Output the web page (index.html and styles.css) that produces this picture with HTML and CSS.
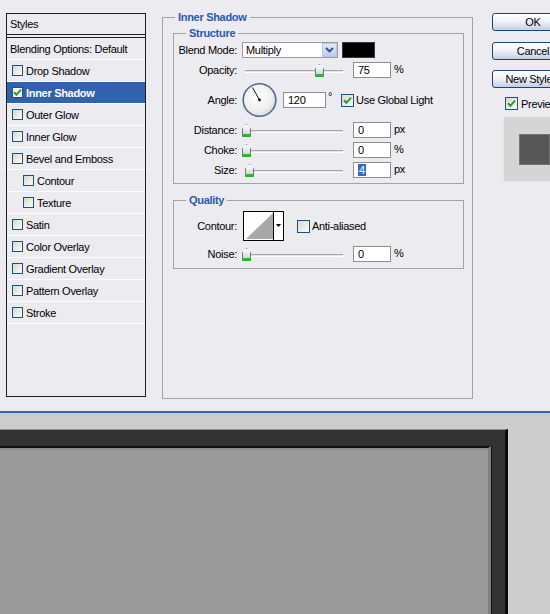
FILE: index.html
```html
<!DOCTYPE html>
<html lang="en">
	<head>
		<meta charset="UTF-8" />
		<meta name="viewport" content="width=device-width, initial-scale=1.0" />
		<title>Layer Style</title>

		<link rel="stylesheet" href="styles.css">
	</head>
	<body>
		<div class="dialog">
			<!-- style list -->
			<ul class="styles">
				<li class="styles_head">Styles</li>
				<li class="styles_blend">Blending Options: Default</li>
				<li><span class="check"></span>Drop Shadow</li>
				<li class="on">
					<span class="check">
						<svg width="9" height="9" viewBox="0 0 9 9"><path d="M1 4.2 L3.4 6.8 L8 1.6" fill="none" stroke="#21a121" stroke-width="2" /></svg>
					</span>Inner Shadow
				</li>
				<li><span class="check"></span>Outer Glow</li>
				<li><span class="check"></span>Inner Glow</li>
				<li><span class="check"></span>Bevel and Emboss</li>
				<li class="sub"><span class="check"></span>Contour</li>
				<li class="sub"><span class="check"></span>Texture</li>
				<li><span class="check"></span>Satin</li>
				<li><span class="check"></span>Color Overlay</li>
				<li><span class="check"></span>Gradient Overlay</li>
				<li><span class="check"></span>Pattern Overlay</li>
				<li><span class="check"></span>Stroke</li>
			</ul>

			<!-- settings -->
			<fieldset class="group main">
				<legend>Inner Shadow</legend>

				<fieldset class="group structure">
					<legend>Structure</legend>

					<div class="row">
						<span class="label">Blend Mode:</span>
						<div class="select">
							<span class="select_text">Multiply</span>
							<span class="select_btn">
								<svg width="9" height="6" viewBox="0 0 9 6"><path d="M1 1 L4.5 4.5 L8 1" fill="none" stroke="#3b4f74" stroke-width="1.8" /></svg>
							</span>
						</div>
						<span class="swatch"></span>
					</div>

					<div class="row">
						<span class="label">Opacity:</span>
						<div class="slider">
							<span class="slider_track"></span>
							<span class="thumb" style="left: 73px"></span>
						</div>
						<span class="field">75</span>
						<span class="unit">%</span>
					</div>

					<div class="row row_angle">
						<span class="label">Angle:</span>
						<svg class="dial" width="35" height="36" viewBox="0 0 35 36">
							<defs>
								<radialGradient id="dialFill" cx="0.45" cy="0.4" r="0.6">
									<stop offset="0" stop-color="#ffffff" />
									<stop offset="0.7" stop-color="#f0f0ee" />
									<stop offset="1" stop-color="#d6d9e2" />
								</radialGradient>
							</defs>
							<circle cx="17.5" cy="18" r="16.3" fill="url(#dialFill)" stroke="#56698e" stroke-width="1.6" />
							<line x1="17.5" y1="18" x2="10.5" y2="5.5" stroke="#111" stroke-width="1" />
							<circle cx="17.5" cy="18" r="1.4" fill="#111" />
						</svg>
						<span class="field field_angle">120</span>
						<span class="degree">°</span>
						<span class="check check_main">
							<svg width="9" height="9" viewBox="0 0 9 9"><path d="M1 4.2 L3.4 6.8 L8 1.6" fill="none" stroke="#21a121" stroke-width="2" /></svg>
						</span>
						<span class="check_text">Use Global Light</span>
					</div>

					<div class="row">
						<span class="label">Distance:</span>
						<div class="slider">
							<span class="slider_track"></span>
							<span class="thumb" style="left: 0px"></span>
						</div>
						<span class="field">0</span>
						<span class="unit">px</span>
					</div>

					<div class="row">
						<span class="label">Choke:</span>
						<div class="slider">
							<span class="slider_track"></span>
							<span class="thumb" style="left: 0px"></span>
						</div>
						<span class="field">0</span>
						<span class="unit">%</span>
					</div>

					<div class="row">
						<span class="label">Size:</span>
						<div class="slider">
							<span class="slider_track"></span>
							<span class="thumb" style="left: 3px"></span>
						</div>
						<span class="field"><span class="selected">4</span></span>
						<span class="unit">px</span>
					</div>
				</fieldset>

				<fieldset class="group quality">
					<legend>Quality</legend>

					<div class="row row_contour">
						<span class="label">Contour:</span>
						<svg class="contour" width="41" height="30" viewBox="0 0 41 30">
							<rect x="0.5" y="0.5" width="40" height="29" fill="#fff" stroke="#000" />
							<polygon points="3,28 30,2 30,28" fill="#a8a8a8" />
							<line x1="30.5" y1="1" x2="30.5" y2="29" stroke="#000" />
							<polygon points="33,13 38,13 35.5,16" fill="#000" />
						</svg>
						<span class="check check_main check_aa"></span>
						<span class="check_text">Anti-aliased</span>
					</div>

					<div class="row row_noise">
						<span class="label">Noise:</span>
						<div class="slider">
							<span class="slider_track"></span>
							<span class="thumb" style="left: 0px"></span>
						</div>
						<span class="field">0</span>
						<span class="unit">%</span>
					</div>
				</fieldset>
			</fieldset>

			<!-- buttons -->
			<div class="side">
				<div class="btn">OK</div>
				<div class="btn btn_cancel">Cancel</div>
				<div class="btn btn_new">New Style...</div>
				<div class="preview_check">
					<span class="check check_main">
						<svg width="9" height="9" viewBox="0 0 9 9"><path d="M1 4.2 L3.4 6.8 L8 1.6" fill="none" stroke="#21a121" stroke-width="2" /></svg>
					</span>
					<span class="check_text">Preview</span>
				</div>
				<div class="preview_box">
					<div class="preview_square"></div>
				</div>
			</div>
		</div>

		<!-- document canvas -->
		<div class="canvas">
			<div class="frame">
				<div class="canvas_inner"></div>
			</div>
		</div>
	</body>
</html>
```

FILE: styles.css
```css
* {
	padding: 0;
	margin: 0;
	box-sizing: border-box;
}
li {
	list-style: none;
}

body {
	width: 550px;
	height: 614px;
	overflow: hidden;
	background-color: #cdcdcd;
	font-family: "Liberation Sans", Arial, sans-serif;
	font-size: 11px;
	letter-spacing: -0.3px;
	color: #000;
}

.dialog {
	display: flex;
	align-items: flex-start;
	height: 413px;
	padding-left: 6px;
	background-color: #ecebf0;
	border-bottom: 2px solid #3563b0;
}

/* style list */
.styles {
	flex: none;
	margin-top: 13px;
	width: 140px;
	height: 384px;
	border: 1px solid #1e1e1e;
}

.styles li {
	display: flex;
	align-items: center;
	gap: 3px;
	height: 22px;
	padding-left: 5px;
	border-bottom: 1px solid #fff;
	white-space: nowrap;
}

.styles .styles_head {
	height: 24px;
	padding-left: 3px;
	border-bottom: 4px double #222;
}

.styles .styles_blend {
	padding-left: 3px;
}

.styles .sub {
	padding-left: 16px;
}

.styles .on {
	background-color: #3162ae;
	color: #fff;
	font-weight: bold;
}

.check {
	display: flex;
	justify-content: center;
	align-items: center;
	flex: none;
	width: 11px;
	height: 11px;
	border: 1px solid #1c5180;
	background: linear-gradient(135deg, #d8d8d2, #fafaf8);
}

.styles .on .check {
	background: #fff;
}

.check_main {
	width: 13px;
	height: 13px;
}

.check_text {
	margin-left: 2px;
}

/* group boxes */
.group {
	border: 1px solid #a2a2a8;
}

.group > legend {
	padding: 0 3px;
	line-height: 13px;
	font-weight: bold;
	color: #2a58aa;
}

.main {
	flex: none;
	margin-top: 11px;
	margin-left: 16px;
	width: 310px;
	height: 388px;
	padding: 3px 8px 0 10px;
}

.main > legend {
	margin-left: 2px;
}

.structure,
.quality {
	width: 291px;
}

.structure > legend,
.quality > legend {
	margin-left: 12px;
}

.structure {
	padding: 2px 0 5px 0;
}

.quality {
	margin-top: 10px;
	padding: 4px 0 6px 0;
}

.row {
	display: flex;
	align-items: center;
	height: 16px;
	white-space: nowrap;
}

.row + .row {
	margin-top: 4px;
}

.row_angle {
	height: 36px;
}

.row_contour {
	height: 30px;
}

.quality .row_noise {
	margin-top: 5px;
}

.label {
	flex: none;
	width: 63px;
	margin-right: 5px;
	text-align: right;
}

/* controls */
.select {
	display: flex;
	align-items: center;
	justify-content: space-between;
	width: 96px;
	height: 16px;
	border: 1px solid #9c9ca0;
	background-color: #fff;
}

.select_text {
	padding-left: 3px;
}

.select_btn {
	display: flex;
	justify-content: center;
	align-items: center;
	width: 15px;
	height: 14px;
	border: 1px solid #b4c6ea;
	background: linear-gradient(#e2ebfc, #b9ccf2);
}

.swatch {
	margin-left: 4px;
	width: 33px;
	height: 16px;
	background-color: #000;
	border: 1px solid #3a3a3a;
}

.slider {
	position: relative;
	display: flex;
	align-items: center;
	flex: none;
	width: 111px;
	height: 16px;
}

.slider_track {
	display: block;
	margin-left: 3px;
	margin-top: 2px;
	width: 98px;
	height: 3px;
	background-color: #e4e4e0;
	border-top: 1px solid #a6a6a2;
	border-bottom: 1px solid #fff;
}

.thumb {
	position: absolute;
	top: 2px;
	width: 9px;
	height: 13px;
	background: linear-gradient(#ffffff, #d4d8dc);
	border: 1px solid #6a7c8a;
	border-bottom: 3px solid #2fb42f;
	clip-path: polygon(0 35%, 50% 0, 100% 35%, 100% 100%, 0 100%);
}

.field {
	flex: none;
	width: 38px;
	height: 16px;
	padding-left: 4px;
	border: 1px solid #8e8e8e;
	background-color: #fff;
	line-height: 14px;
}

.field_angle {
	margin-left: 6px;
	width: 43px;
}

.selected {
	display: inline-block;
	padding: 0 1px;
	background-color: #316ac5;
	color: #fff;
	line-height: 12px;
}

.unit {
	margin-left: 3px;
	margin-bottom: 3px;
}

.dial {
	flex: none;
}

.degree {
	margin-left: 2px;
	margin-bottom: 8px;
}

.row_angle .check_main {
	margin-left: 9px;
}

.contour {
	flex: none;
	margin-left: 1px;
}

.check_aa {
	margin-left: 13px;
}

/* buttons */
.side {
	flex: none;
	display: flex;
	flex-direction: column;
	margin-top: 13px;
	margin-left: 19px;
	width: 84px;
}

.btn {
	width: 82px;
	height: 18px;
	border: 1px solid #22426f;
	border-radius: 3px;
	background: linear-gradient(#ffffff, #f1f3f9 45%, #c2cee6);
	text-align: center;
	line-height: 16px;
	white-space: nowrap;
}

.btn_cancel {
	margin-top: 11px;
}

.btn_new {
	margin-top: 10px;
}

.preview_check {
	display: flex;
	align-items: center;
	margin-top: 9px;
	padding-left: 13px;
	height: 13px;
}

.preview_check .check_text {
	margin-left: 3px;
}

.preview_box {
	margin-top: 6px;
	margin-left: 11px;
	width: 66px;
	height: 66px;
	padding: 17px 0 0 15px;
	background-color: #d5d5d5;
	border: 1px solid #e6e6e6;
}

.preview_square {
	width: 31px;
	height: 31px;
	background-color: #575757;
	border: 1px solid #767676;
}

/* document canvas */
.canvas {
	height: 201px;
	padding-top: 16px;
	background-color: #cdcdcd;
}

.frame {
	width: 508px;
	height: 185px;
	padding-top: 16px;
	background-color: #333;
	border-top: 1px solid #8c8c8c;
	border-right: 3px solid #0b0b0b;
}

.canvas_inner {
	width: 491px;
	height: 168px;
	background-color: #9a9a9a;
	border-top: 2px solid #101010;
	border-right: 3px solid #808080;
	box-shadow: 1px 0 0 #111, inset 0 2px 0 #8c8c8c;
}
```
